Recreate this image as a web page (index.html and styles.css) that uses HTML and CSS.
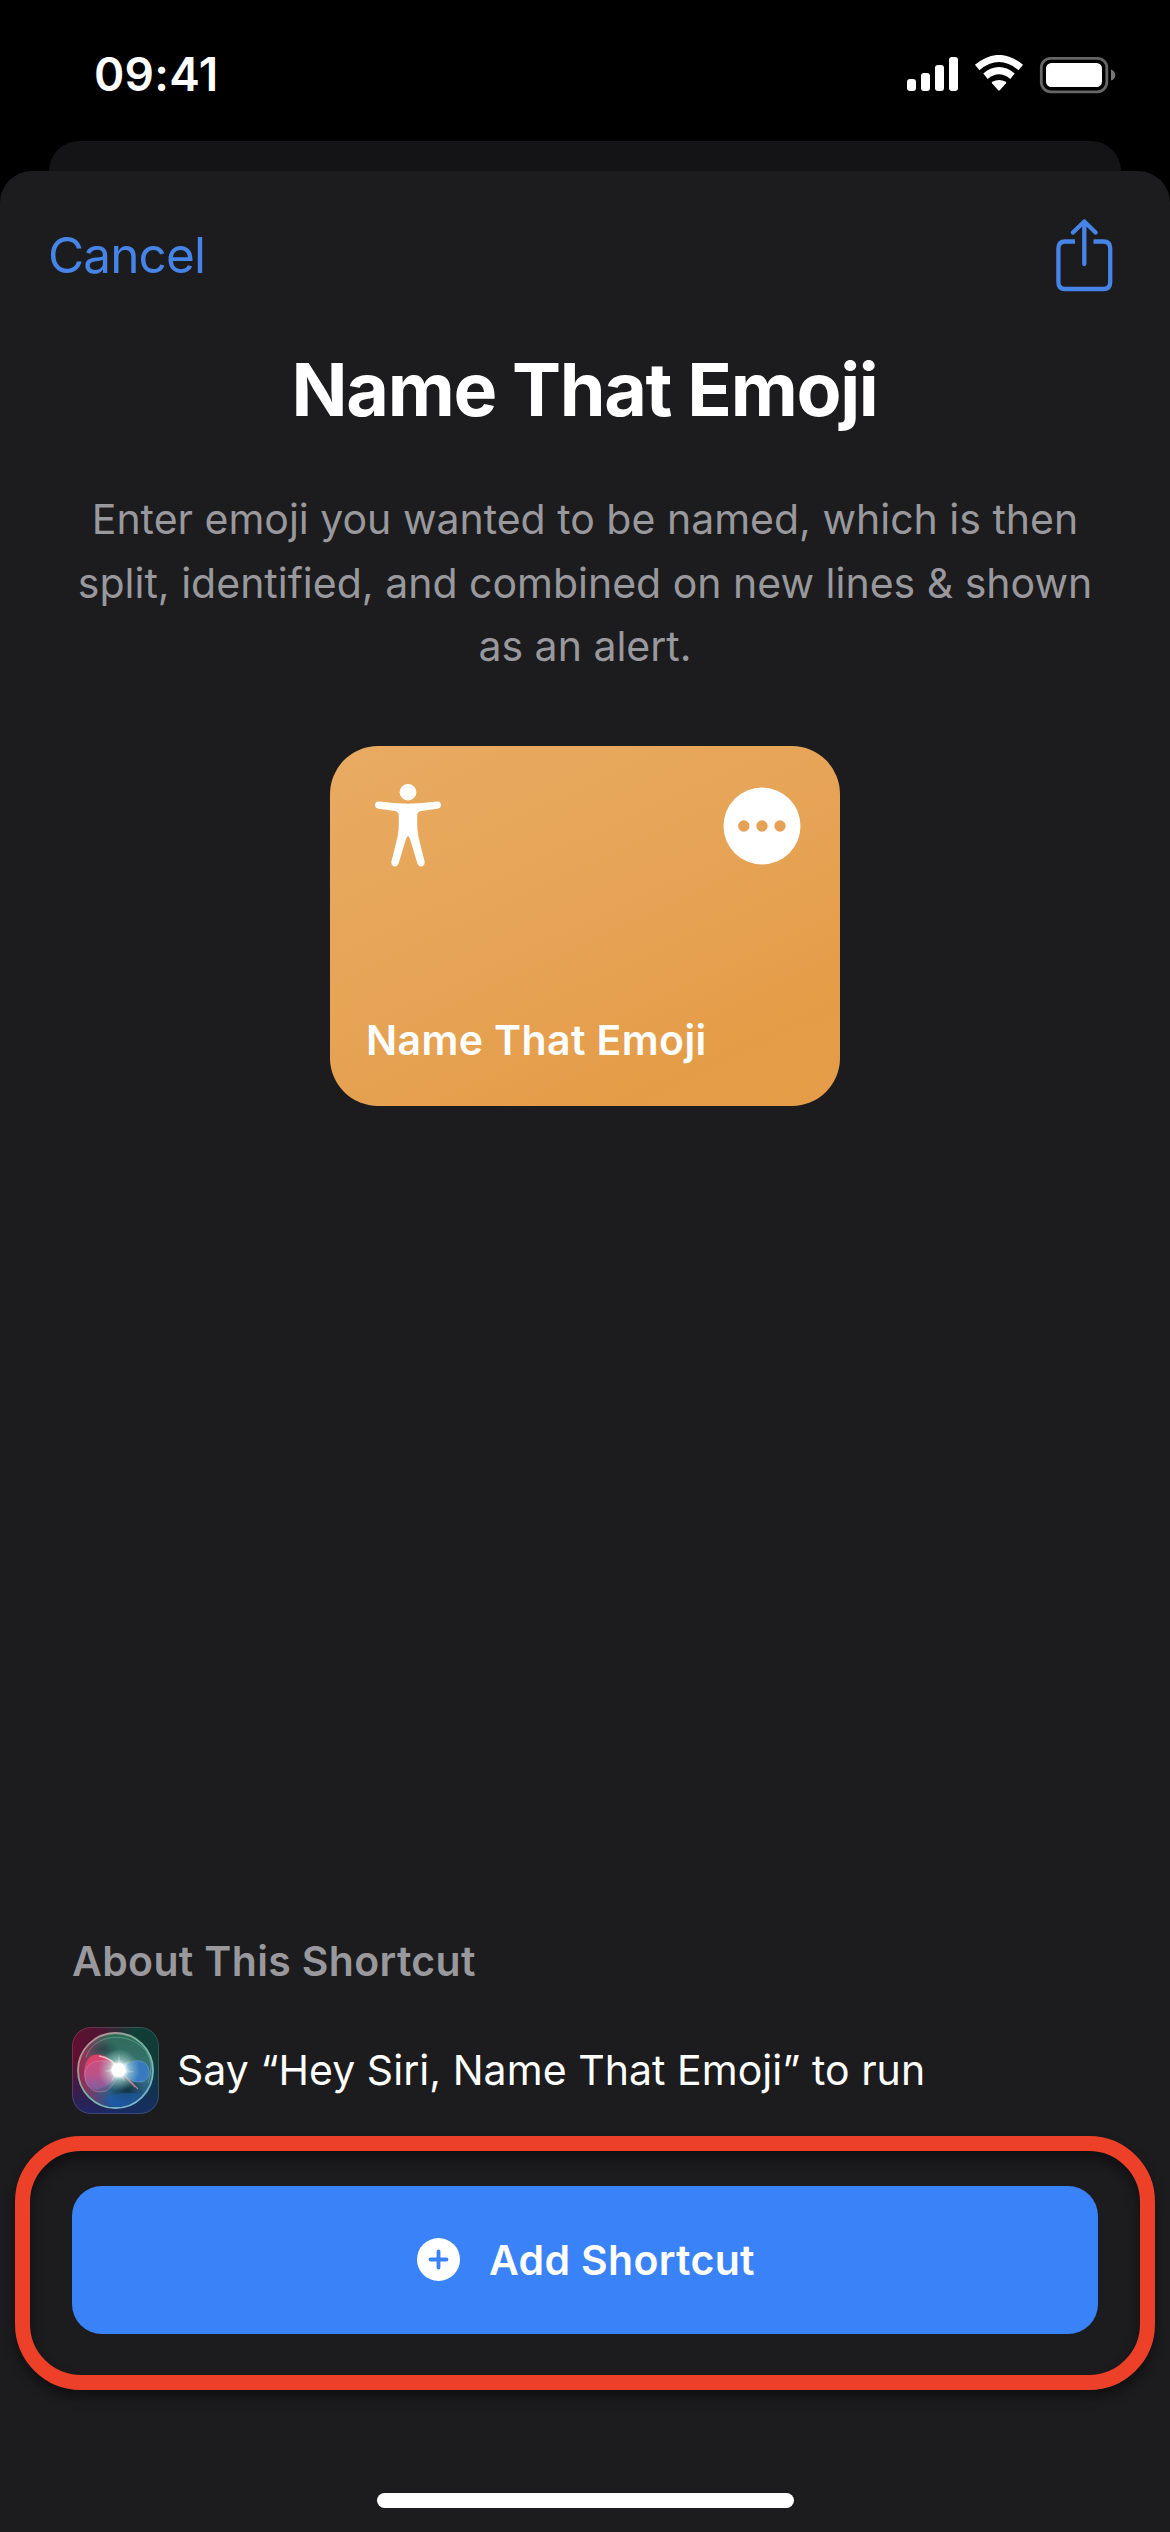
FILE: index.html
```html
<!DOCTYPE html>
<html lang="en">
<head>
<meta charset="utf-8">
<title>Name That Emoji</title>
<link rel="stylesheet" href="styles.css">
</head>
<body>
<header class="status-bar">
  <span class="time">09:41</span>
  <svg class="status-icons" width="210" height="40" viewBox="906 55 210 40">
    <g fill="#fff">
      <rect x="907" y="79" width="9" height="12" rx="3"/>
      <rect x="921" y="73" width="9" height="18" rx="3"/>
      <rect x="935" y="65" width="9" height="26" rx="3"/>
      <rect x="949" y="57" width="9" height="34" rx="3"/>
      <path d="M992 83.300Q991.300 82.500 992.200 81.800Q999 78.400 1005.800 81.800Q1006.700 82.500 1006 83.300L999.800 90.300Q999 91.100 998.200 90.300Z"/>
    </g>
    <g fill="none" stroke="#fff" stroke-width="7">
      <path d="M985.500 76.200Q999 65.200 1012.500 76.200"/>
      <path d="M977.200 67.500Q999 49.500 1020.800 67.500"/>
    </g>
    <rect x="1041.300" y="58.300" width="65.500" height="33.500" rx="9.500" fill="none" stroke="#666" stroke-width="2.800"/>
    <rect x="1046" y="63" width="56" height="24" rx="5.500" fill="#fff"/>
    <path d="M1111 69.500Q1115.200 71 1115.200 75.200Q1115.200 79 1111 80.500Z" fill="#777"/>
  </svg>
</header>
<div class="back-sheet"></div>
<main class="sheet">
  <nav class="toolbar">
    <a class="cancel">Cancel</a>
    <svg class="share" width="58" height="75" viewBox="0 0 58 75" fill="none" stroke="#4684e8" stroke-width="4.300" stroke-linecap="round" stroke-linejoin="round">
      <path stroke-linecap="butt" d="M19 23.500H9.200Q2.400 23.500 2.400 30.300V64.200Q2.400 71 9.200 71H47.400Q54.200 71 54.200 64.200V30.300Q54.200 23.500 47.400 23.500H37.500"/>
      <path d="M28.300 46V3.500M17 14.500L28.300 3.500L39.600 14.500"/>
    </svg>
  </nav>
  <h1 class="title">Name That Emoji</h1>
  <p class="description">Enter emoji you wanted to be named, which is then<br>split, identified, and combined on new lines &amp; shown<br>as an alert.</p>
  <article class="card">
    <div class="card-icons">
      <svg class="person" width="66" height="83" viewBox="0 0 66 87.500" preserveAspectRatio="none" fill="#fff">
        <ellipse cx="33" cy="8.700" rx="8.400" ry="8.700"/>
        <path d="M4 18.500Q0 18.100 0 22.500Q0 25.500 3.500 26L20 28.500Q23.500 29.200 23.700 32.500Q24.300 47 22.500 56L16.500 81.500Q15.800 85.500 18.500 86.700Q22 88 23.500 84L30.800 58.500Q33 51.500 35.200 58.500L42.500 84Q44 88 47.500 86.700Q50.200 85.500 49.500 81.500L43.500 56Q41.700 47 42.300 32.500Q42.500 29.200 46 28.500L62.500 26Q66 25.500 66 22.500Q66 18.100 62 18.500Q33 23 4 18.500Z"/>
      </svg>
      <svg class="more" width="78" height="78" viewBox="0 0 78 78">
        <circle cx="39" cy="39" r="38.500" fill="#fff"/>
        <g fill="#e5a256"><circle cx="20.800" cy="39" r="5.700"/><circle cx="39" cy="39" r="5.700"/><circle cx="57" cy="39" r="5.700"/></g>
      </svg>
    </div>
    <h2 class="card-name">Name That Emoji</h2>
  </article>
  <section class="about">
    <h3 class="about-title">About This Shortcut</h3>
    <div class="siri-row">
      <svg class="siri" width="87" height="87" viewBox="0 0 87 87">
        <defs>
          <linearGradient id="base" x1="0" y1="0" x2="1" y2="0"><stop offset="0" stop-color="#630f30"/><stop offset=".35" stop-color="#4b1734"/><stop offset=".7" stop-color="#123f37"/><stop offset="1" stop-color="#103a36"/></linearGradient>
          <linearGradient id="low" x1="0" y1="0" x2="0" y2="1"><stop offset=".4" stop-color="#102a66" stop-opacity="0"/><stop offset="1" stop-color="#182a68" stop-opacity=".9"/></linearGradient>
          <linearGradient id="orb" x1="0" y1="0" x2="0" y2="1"><stop offset="0" stop-color="#2c6b57"/><stop offset=".5" stop-color="#3a7273"/><stop offset="1" stop-color="#1d4f96"/></linearGradient>
          <linearGradient id="side" x1="0" y1="0" x2="1" y2="0"><stop offset="0" stop-color="#a02450"/><stop offset=".45" stop-color="#903b60" stop-opacity="0"/></linearGradient>
          <linearGradient id="rim" x1="0" y1="0" x2="1" y2="1"><stop offset="0" stop-color="#d77c92"/><stop offset=".45" stop-color="#76b69c"/><stop offset="1" stop-color="#78b4e4"/></linearGradient>
          <linearGradient id="petal" x1="0" y1="0" x2="0" y2="1"><stop offset="0" stop-color="#dc4268"/><stop offset=".55" stop-color="#ca4776"/><stop offset="1" stop-color="#735a9d"/></linearGradient>
          <radialGradient id="shade"><stop offset="0" stop-color="#102c35" stop-opacity=".85"/><stop offset="1" stop-color="#102c35" stop-opacity="0"/></radialGradient>
          <radialGradient id="glow"><stop offset="0" stop-color="#fff"/><stop offset=".28" stop-color="#f4fffc"/><stop offset=".5" stop-color="#c8ebe4" stop-opacity=".55"/><stop offset="1" stop-color="#9fd8cd" stop-opacity="0"/></radialGradient>
        </defs>
        <rect width="87" height="87" rx="19" fill="url(#base)"/>
        <rect width="87" height="87" rx="19" fill="url(#low)"/>
        <rect x=".5" y=".5" width="86" height="86" rx="18.500" fill="none" stroke="#fff" stroke-opacity=".14"/>
        <circle cx="43.500" cy="43.500" r="37.500" fill="url(#orb)"/>
        <circle cx="43.500" cy="43.500" r="37.500" fill="url(#side)"/>
        <ellipse cx="55" cy="63" rx="18" ry="16" fill="url(#shade)"/>
        <ellipse cx="31" cy="22" rx="16" ry="9" fill="url(#shade)" opacity=".6"/>
        <path d="M47 43C36 24 17 22 13 39C9 56 19 67 32 60C39 57 44 49 47 43Z" fill="url(#petal)"/>
        <path d="M47 43C38 31 17 30 13 45C12 57 19 68 34 64C40 61 45 52 47 43Z" fill="#a46ab0" fill-opacity=".3" stroke="#e99bb4" stroke-opacity=".5" stroke-width=".8"/>
        <path d="M47 43C57 34 68 30 75 38C80 47 76 55 67 55C59 55 53 49 47 43Z" fill="#3a7bc6" fill-opacity=".9" stroke="#72a9dc" stroke-opacity=".7" stroke-width=".8"/>
        <path d="M33 71Q46 64 69 67Q57 80 43 80Q35 79 33 71Z" fill="#1d5cad" opacity=".6"/>
        <path d="M47 43L63 60M47 43L66 62" stroke="#dc879b" stroke-width="1.100" opacity=".8"/>
        <circle cx="47" cy="43" r="21" fill="url(#glow)"/>
        <path d="M47 27L49 38L58 33L52 42L63 45L51 46L53 55L47 48L39 55L42 46L32 44L42 41L37 32L45 38Z" fill="#fff" opacity=".25"/>
        <path d="M27 29Q40 31 47 42" stroke="#fff" stroke-width="1.500" fill="none" opacity=".6"/>
        <circle cx="46.500" cy="43" r="7" fill="#fff"/>
        <path d="M14 30C22 7 56 3 74 24Q83 38 76 56" stroke="#7fc3a3" stroke-opacity=".45" stroke-width="1" fill="none"/>
        <circle cx="43.500" cy="43.500" r="37.500" fill="none" stroke="url(#rim)" stroke-width="1.800"/>
      </svg>
      <span class="siri-text">Say “Hey Siri, Name That Emoji” to run</span>
    </div>
  </section>
  <div class="action">
    <button class="add">
      <svg width="43" height="43" viewBox="0 0 43 43"><circle cx="21.500" cy="21.500" r="21.500" fill="#fff"/><path d="M21.500 13.500V29.500M13.500 21.500H29.500" stroke="#3a82f7" stroke-width="3.800" stroke-linecap="round"/></svg>
      <span>Add Shortcut</span>
    </button>
    <div class="highlight"></div>
  </div>
  <div class="home-indicator"></div>
</main>
</body>
</html>
```
FILE: styles.css
```css
* {
  box-sizing: border-box;
  margin: 0;
}

body {
  display: flex;
  flex-direction: column;
  width: 1170px;
  height: 2532px;
  background: #000;
  color: #fff;
  font-family: Inter, "Liberation Sans", sans-serif;
  font-size: 41px;
  line-height: 50px;
  white-space: nowrap;
}

svg {
  display: block;
  flex: none;
}

.status-bar {
  display: flex;
  justify-content: space-between;
  align-items: flex-start;
  height: 141px;
  padding: 46px 54px 0 94px;
}

.time {
  font-size: 46px;
  font-weight: 600;
  line-height: 56px;
  letter-spacing: 0.27px;
}

.status-icons {
  margin-top: 9px;
}

.back-sheet {
  height: 30px;
  margin: 0 49px;
  border-radius: 30px 30px 0 0;
  background: #141416;
}

.sheet {
  display: flex;
  flex: 1;
  flex-direction: column;
  border-radius: 32px 32px 0 0;
  background: #1c1c1e;
}

.toolbar {
  display: flex;
  justify-content: space-between;
  align-items: flex-start;
  height: 174px;
  padding: 47px 56px 0 48px;
}

.cancel {
  margin-top: 7px;
  color: #4684e8;
  font-size: 49.5px;
  line-height: 60px;
  letter-spacing: -0.87px;
}

.title {
  padding-right: 1px;
  font-size: 73.5px;
  font-weight: 700;
  line-height: 90px;
  letter-spacing: -1.3px;
  text-align: center;
}

.description {
  margin-top: 53px;
  color: #98989d;
  line-height: 63.5px;
  text-align: center;
}

.card {
  display: flex;
  flex-direction: column;
  justify-content: space-between;
  align-self: center;
  width: 510px;
  height: 360px;
  margin-top: 67.5px;
  padding: 38px 39px 41px 36px;
  border-radius: 48px;
  background: linear-gradient(155deg, #e8ab62 0%, #e6a355 50%, #e59c47 82%, #e59d49 100%);
}

.card-icons {
  display: flex;
  justify-content: space-between;
}

.person {
  margin-left: 9px;
}

.more {
  margin-top: 3px;
}

.card-name {
  font-size: 41px;
  font-weight: 600;
  letter-spacing: 0.39px;
}

.about {
  margin-top: auto;
  padding: 0 72px;
}

.about-title {
  color: #98989d;
  font-size: 41px;
  font-weight: 600;
  letter-spacing: 0.34px;
}

.siri-row {
  display: flex;
  align-items: center;
  gap: 18px;
  margin-top: 41px;
}

.siri-text {
  padding-bottom: 2px;
  letter-spacing: 0.04px;
}

.action {
  position: relative;
  margin: 72px 72px 0;
}

.add {
  display: flex;
  justify-content: center;
  align-items: center;
  gap: 29px;
  width: 100%;
  height: 148px;
  padding: 0 0 1px 2px;
  border: 0;
  border-radius: 30px;
  background: #3a82f7;
  color: #fff;
  font: 600 41px/50px Inter, "Liberation Sans", sans-serif;
  letter-spacing: 0.32px;
}

/* Callout ring drawn over the button */
.highlight {
  position: absolute;
  top: -50px;
  right: -57px;
  bottom: -56px;
  left: -57px;
  border: 15.5px solid #ec4128;
  border-radius: 66px;
  box-shadow: 0 7px 12px rgba(0, 0, 0, 0.45), inset 0 7px 12px rgba(0, 0, 0, 0.45);
}

.home-indicator {
  align-self: center;
  width: 417px;
  height: 15px;
  margin: 159px 0 24px;
  border-radius: 8px;
  background: #fff;
}
```
